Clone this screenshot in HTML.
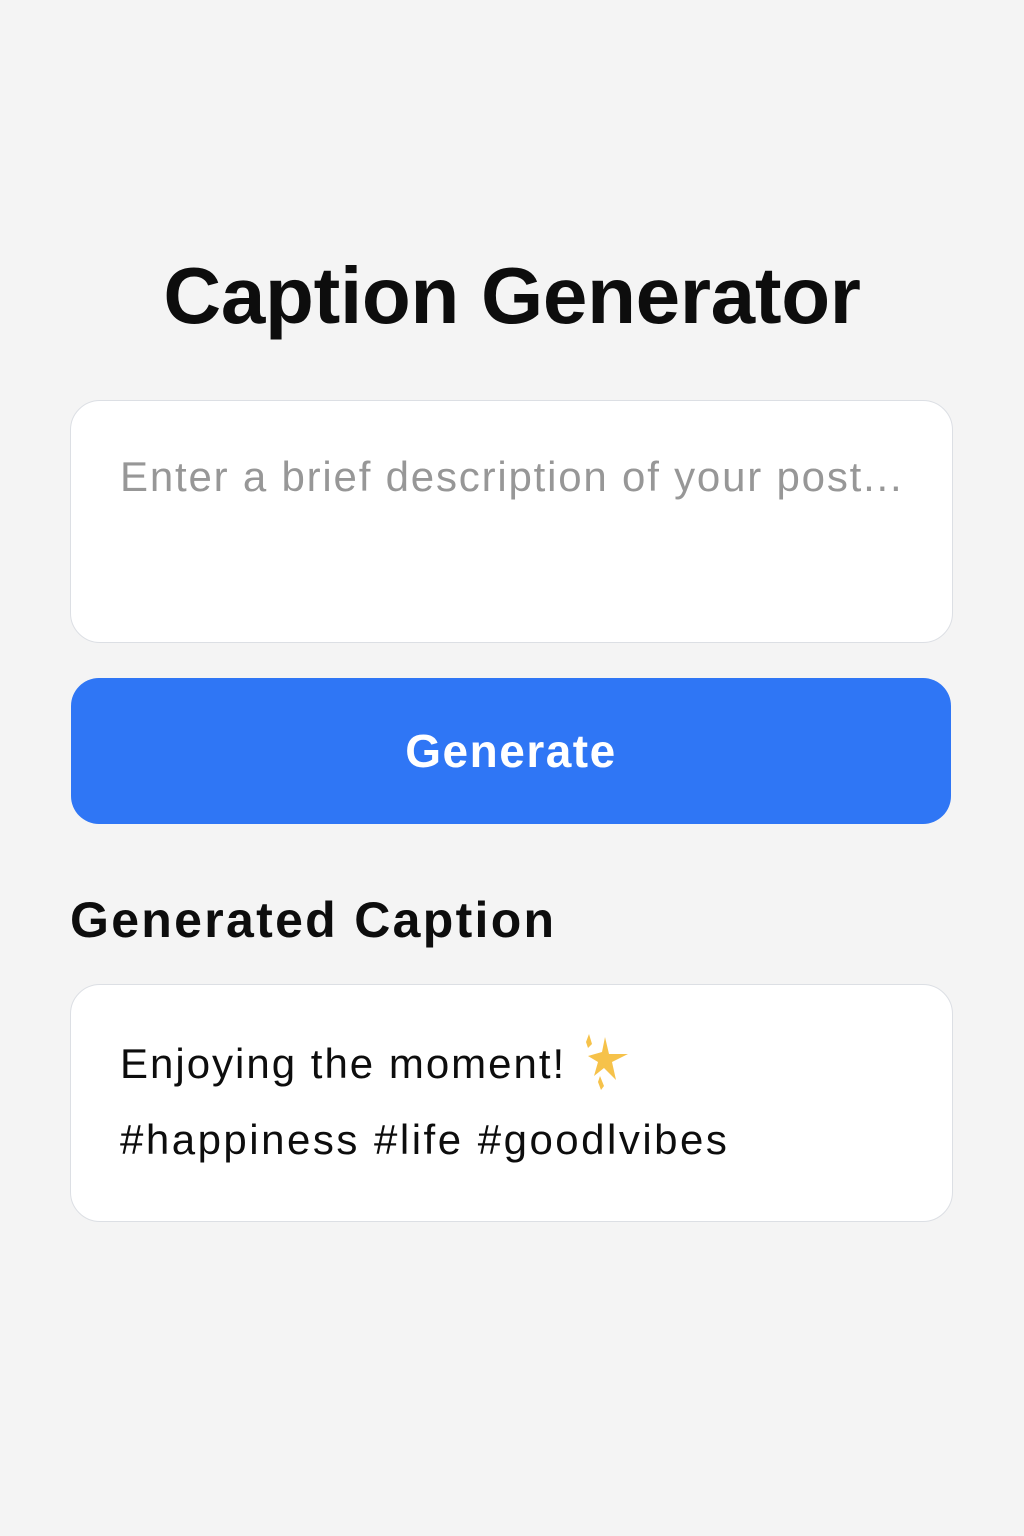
<!DOCTYPE html>
<html><head><meta charset="utf-8"><style>
html,body{margin:0;padding:0;}
body{width:1024px;height:1536px;background:#f4f4f4;font-family:"Liberation Sans",sans-serif;position:relative;overflow:hidden;color:#0d0d0d;}
.t{position:absolute;left:0;width:1024px;top:248px;text-align:center;font-size:80px;font-weight:bold;line-height:96px;letter-spacing:-0.3px;}
.in{position:absolute;left:70px;top:400px;width:881px;height:241px;background:#fff;border:1.5px solid #dcdfe4;border-radius:30px;}
.ph{position:absolute;left:120px;top:452px;font-size:42px;color:#979797;line-height:50px;letter-spacing:1.8px;}
.btn{position:absolute;left:71px;top:678px;width:880px;height:146px;background:#2f76f5;border-radius:28px;color:#fff;font-weight:bold;font-size:46px;text-align:center;line-height:146px;letter-spacing:1.5px;}
.h{position:absolute;left:70px;top:890px;font-size:50px;font-weight:bold;line-height:60px;letter-spacing:2.3px;}
.out{position:absolute;left:70px;top:984px;width:881px;height:236px;background:#fff;border:1.5px solid #dcdfe4;border-radius:30px;}
.l{position:absolute;left:120px;font-size:42px;line-height:50px;}
</style></head><body>
<div class="t">Caption Generator</div>
<div class="in"></div>
<div class="ph">Enter a brief description of your post...</div>
<div class="btn">Generate</div>
<div class="h">Generated Caption</div>
<div class="out"></div>
<div class="l" style="top:1032px;letter-spacing:2px">Enjoying the moment! <svg width="50" height="60" viewBox="0 0 50 60" style="vertical-align:-14px"><path d="M25 5 L29 22 L48 22 L32 30 L36 48 L24 36 L14 44 L18 30 L8 24 L22 20 Z" fill="#f6c24a"/><path d="M9 2 L12 12 L8 16 L6 10 Z" fill="#f6c24a"/><path d="M20 44 L24 54 L21 58 L18 50 Z" fill="#f6c24a"/></svg></div>
<div class="l" style="top:1115px;letter-spacing:2.5px">#happiness #life #goodlvibes</div>
</body></html>
